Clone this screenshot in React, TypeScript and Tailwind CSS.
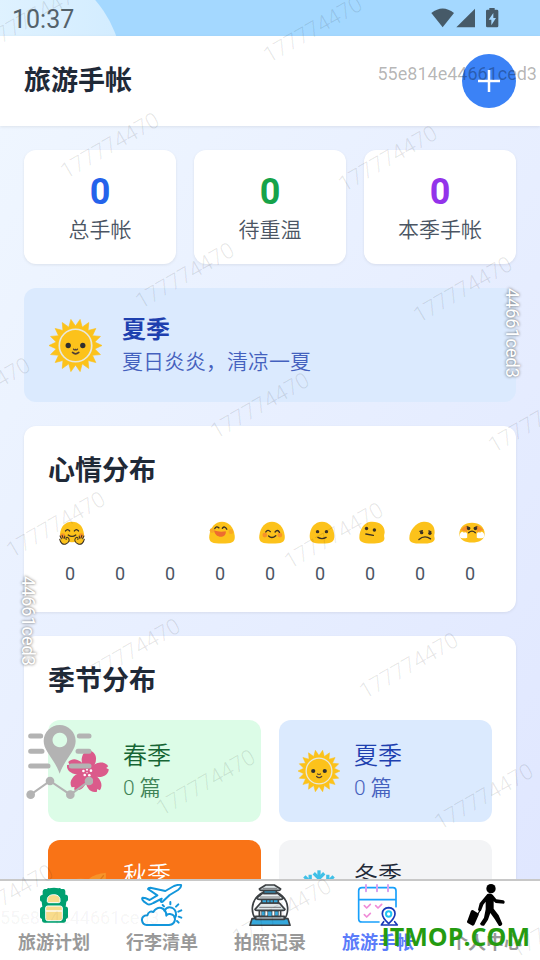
import type { ReactNode } from "react";

type Mood = "hug" | "laugh" | "blush" | "smile" | "neutral" | "sad" | "huff";

interface Season {
  name: string;
  count: number;
  card: string;
  icon: ReactNode;
}

interface Tab {
  label: string;
  icon: ReactNode;
  active?: boolean;
}

const STATS = [
  { label: "总手帐", value: 0, color: "text-[#2563eb]" },
  { label: "待重温", value: 0, color: "text-[#16a34a]" },
  { label: "本季手帐", value: 0, color: "text-[#9333ea]" },
];

const MOODS: { face: Mood | null; count: number }[] = [
  { face: "hug", count: 0 },
  { face: null, count: 0 },
  { face: null, count: 0 },
  { face: "laugh", count: 0 },
  { face: "blush", count: 0 },
  { face: "smile", count: 0 },
  { face: "neutral", count: 0 },
  { face: "sad", count: 0 },
  { face: "huff", count: 0 },
];

// 18 spikes, one pointing straight right
const SUN_POINTS = Array.from({ length: 36 }, (_, i) => {
  const r = i % 2 === 0 ? 80 : 59;
  const a = (i * Math.PI) / 18;
  return `${(80 + r * Math.cos(a)).toFixed(1)},${(80 + r * Math.sin(a)).toFixed(1)}`;
}).join(" ");

function SunIcon({ className }: { className: string }) {
  return (
    <svg className={className} viewBox="0 0 160 160" aria-hidden="true">
      <polygon points={SUN_POINTS} fill="#fcc21b" stroke="#fcc21b" strokeWidth="2" />
      <circle cx="80" cy="80" r="49" fill="#fcc21b" stroke="#e8e8dc" strokeWidth="5" />
      <circle cx="58" cy="80" r="8" fill="#2f2f2f" />
      <circle cx="102" cy="80" r="8" fill="#2f2f2f" />
      <path d="M74 91q3 4 6 1q3 3 6-1" fill="none" stroke="#513f35" strokeWidth="4" strokeLinecap="round" />
      <path d="M71 101q9 8 19 0" fill="none" stroke="#513f35" strokeWidth="5" strokeLinecap="round" />
    </svg>
  );
}

function SakuraIcon({ className }: { className: string }) {
  return (
    <svg className={className} viewBox="0 0 128 128" aria-hidden="true">
      <g fill="#db5a8b">
        {[6, 78, 150, 222, 294].map((deg) => (
          <path
            key={deg}
            transform={`rotate(${deg} 62 68)`}
            d="M62 74C50 58 38 40 41 23C42 12 50 4 57 2L61 9L67 2C77 6 84 14 84 25C86 42 74 58 62 74Z"
          />
        ))}
        <circle cx="62" cy="68" r="20" />
      </g>
      <g fill="#fff">
        <circle cx="50" cy="64" r="4" />
        <circle cx="61" cy="60" r="3" />
        <circle cx="73" cy="63" r="4" />
        <circle cx="54" cy="76" r="4" />
        <circle cx="68" cy="77" r="4" />
        <circle cx="61" cy="69" r="2" />
      </g>
    </svg>
  );
}

function LeafIcon({ className }: { className: string }) {
  return (
    <svg className={className} viewBox="0 0 128 128" aria-hidden="true">
      <path d="M118 8C92 12 66 18 60 40C54 64 72 82 92 72C116 60 120 32 118 8Z" fill="#f79329" />
      <path d="M112 16C98 34 82 52 58 92" fill="none" stroke="#e07a1a" strokeWidth="4" />
      <path d="M10 34C34 22 58 22 66 38C74 58 60 78 42 74C22 68 18 48 10 34Z" fill="#f58220" />
      <path d="M18 34C34 46 46 60 62 98" fill="none" stroke="#d96e14" strokeWidth="4" />
    </svg>
  );
}

function SnowflakeIcon({ className }: { className: string }) {
  return (
    <svg className={className} viewBox="0 0 128 128" fill="none" stroke="#40c0e7" strokeWidth="10" aria-hidden="true">
      {[0, 45, 90, 135, 180, 225, 270, 315].map((deg) => (
        <g key={deg} transform={`rotate(${deg} 64 64)`}>
          <path d="M64 64V1" />
          <path d="M48 10L64 26L80 10" />
        </g>
      ))}
    </svg>
  );
}

const BLOBS: Record<Mood, string> = {
  hug: "M38 2C58 2 71 16 73 38C75 56 66 62 38 62C10 62 1 56 3 38C5 16 18 2 38 2Z",
  laugh: "M38 2C58 2 72 18 75 42C77 60 70 66 38 66C6 66 -1 60 1 42C4 18 18 2 38 2Z",
  blush: "M38 2C58 2 72 18 75 42C77 60 70 66 38 66C6 66 -1 60 1 42C4 18 18 2 38 2Z",
  smile: "M38 2C59 2 74 20 74 44C74 61 66 66 38 66C10 66 2 61 2 44C2 20 17 2 38 2Z",
  neutral: "M34 2C58 0 75 12 75 32C75 38 72 40 74 48C77 62 60 66 38 66C10 66 1 60 1 48C1 26 14 4 34 2Z",
  sad: "M42 2C62 0 76 12 75 34C74 40 73 42 75 50C76 62 62 66 38 66C10 66 1 62 1 50C1 28 20 4 42 2Z",
  huff: "M38 5C60 5 75 18 75 38C75 55 58 63 38 63C18 63 1 55 1 38C1 18 16 5 38 5Z",
};

function MoodIcon({ face }: { face: Mood }) {
  return (
    <svg className="h-6 w-[26px]" viewBox="0 0 76 70" aria-hidden="true">
      <path d={BLOBS[face]} fill="#fcc21b" />
      <g fill="none" stroke="#3a3024" strokeWidth="4" strokeLinecap="round">
        {face === "hug" && (
          <>
            <path d="M19 29q6-8 12 0M45 29q6-8 12 0M27 41q11 8 22 0" />
            <circle cx="11" cy="43" r="7" fill="#f79329" stroke="none" />
            <circle cx="65" cy="43" r="7" fill="#f79329" stroke="none" />
            <g strokeWidth="3">
              <path
                d="M3 44l4 8M9 42l3 8M17 44l-1 6M2 53c2 12 10 17 18 14c10-4 12-12 7-18c-4-4-8 0-6 5"
                fill="#fcc21b"
              />
              <path
                d="M73 44l-4 8M67 42l-3 8M59 44l1 6M74 53c-2 12-10 17-18 14c-10-4-12-12-7-18c4-4 8 0 6 5"
                fill="#fcc21b"
              />
            </g>
          </>
        )}
        {face === "laugh" && (
          <>
            <circle cx="9" cy="28" r="7" fill="#f9a825" stroke="none" />
            <circle cx="64" cy="31" r="7" fill="#f9a825" stroke="none" />
            <path d="M17 22q4-9 12-2M39 21q7-8 13 3" />
            <path d="M15 28C27 32 39 32 49 30C52 51 18 53 15 28Z" fill="#ed6c30" stroke="none" />
          </>
        )}
        {face === "blush" && (
          <>
            <circle cx="17" cy="41" r="7" fill="#f79329" stroke="none" />
            <circle cx="61" cy="41" r="7" fill="#f79329" stroke="none" />
            <path d="M20 32q6-9 13-1M47 32q7-9 13 1M28 44q10 9 21-1" />
          </>
        )}
        {face === "smile" && (
          <>
            <circle cx="25" cy="31" r="5" fill="#3a3024" stroke="none" />
            <circle cx="51" cy="31" r="5" fill="#3a3024" stroke="none" />
            <path d="M26 48q12 7 24 0" />
          </>
        )}
        {face === "neutral" && (
          <>
            <circle cx="22" cy="22" r="5" fill="#3a3024" stroke="none" />
            <circle cx="45" cy="26" r="5" fill="#3a3024" stroke="none" />
            <path d="M20 38l22 4" />
          </>
        )}
        {face === "sad" && (
          <>
            <circle cx="37" cy="34" r="5" fill="#3a3024" stroke="none" />
            <circle cx="61" cy="36" r="5" fill="#3a3024" stroke="none" />
            <path d="M32 30l7-2M58 29l6 3M29 54q16-14 34-2" />
          </>
        )}
        {face === "huff" && (
          <>
            <path d="M4 26q8-11 21-14l-1 20zM72 26q-8-11-21-14l1 20z" fill="#f79329" stroke="none" />
            <circle cx="28" cy="22" r="5" fill="#3a3024" stroke="none" />
            <circle cx="48" cy="22" r="5" fill="#3a3024" stroke="none" />
            <path d="M24 17l7 3M52 17l-7 3M28 34q10-9 20 0" />
            <path
              d="M5 34q5-5 9 0q6-3 10 3v12q-9 3-20 0q-5-8 1-15zM71 34q-5-5-9 0q-6-3-10 3v12q9 3 20 0q5-8-1-15z"
              fill="#fff"
              stroke="none"
            />
          </>
        )}
      </g>
    </svg>
  );
}

const SEASONS: Season[] = [
  { name: "春季", count: 0, card: "bg-[#dcfce7] text-[#166534]", icon: <SakuraIcon className="size-[42px]" /> },
  { name: "夏季", count: 0, card: "bg-[#dbeafe] text-[#1e40af]", icon: <SunIcon className="size-[42px]" /> },
  { name: "秋季", count: 0, card: "bg-[#f97316] text-white", icon: <LeafIcon className="size-[42px]" /> },
  { name: "冬季", count: 0, card: "bg-[#f3f4f6] text-[#1f2937]", icon: <SnowflakeIcon className="size-[42px]" /> },
];

const TABS: Tab[] = [
  {
    label: "旅游计划",
    icon: (
      <>
        <path
          d="M42 15Q44 11 49 13Q63 9 77 13Q82 11 84 15H92Q97 16 97 22V32H100Q105 33 105 38V48Q104 52 100 53L98 68H101Q105 70 105 74V100Q104 104 99 105V110Q98 116 92 116H34Q28 116 27 110V105Q22 104 21 100V74Q22 69 28 68L26 53Q21 52 21 48V38Q22 33 29 32V22Q30 16 35 15Z"
          fill="#00a070"
        />
        <path
          d="M43 53V47C43 36 53 32 62 32C71 32 81 36 81 47V53Q80 56 77 56H47Q44 56 43 53Z"
          fill="#f8dc8c"
          stroke="#fff"
          strokeWidth="3"
        />
        <path
          d="M44 66H82Q88 66 88 72V104Q87 110 81 110H44Q38 110 38 104V72Q38 66 44 66Z"
          fill="#f8dc8c"
          stroke="#fff"
          strokeWidth="3"
        />
        <path d="M39 81H87" stroke="#fff" strokeWidth="4" />
      </>
    ),
  },
  {
    label: "行李清单",
    icon: (
      <g fill="none" stroke="#1296db" strokeWidth="6" strokeLinejoin="round" strokeLinecap="round">
        <path d="M5 41L15 43L26 48L49 34L21 15Q22 11 28 11L73 21L99 6Q112 1 120 3Q122 10 111 18L86 33L66 52Q62 57 59 51L62 44L37 57Q25 64 19 60L8 52Q1 45 5 41Z" />
        <path d="M17 123H84Q101 121 102 106Q102 92 87 90Q79 89 76 95Q76 77 61 72Q47 69 37 84Q24 79 19 94Q2 95 3 109Q5 122 17 123Z" />
        <path d="M70 80Q78 67 92 71Q104 76 105 89Q106 98 101 101" />
        <path d="M88 61V54M105 68L112 61M112 83L121 79M113 98L121 101M108 111L113 116M69 67L65 63" />
      </g>
    ),
  },
  {
    label: "拍照记录",
    icon: (
      <g stroke="#3c4043" strokeWidth="5" strokeLinejoin="round" strokeLinecap="round">
        <path d="M22 108A53 53 0 1 1 104 108" fill="#fff" />
        <path d="M9 104H117L123 124H3Z" fill="#35a8dc" />
        <path d="M20 106V97H106V106Z" fill="#d9e3e8" />
        <path d="M31 77H95V97H31Z" fill="#fff" />
        <path d="M38 81H48V95H38ZM57 81H69V97H57ZM78 81H88V95H78Z" fill="#35a8dc" strokeWidth="2" />
        <path d="M35 57H91L108 76Q106 80 99 79H27Q20 80 18 76Z" fill="#dfe7ea" />
        <path d="M38 45H88V57H38Z" fill="#35a8dc" />
        <path d="M53 46V56M63 46V56M73 46V56" strokeWidth="3" />
        <path d="M40 28H86L103 42Q100 47 94 46H32Q26 47 23 42Z" fill="#eef2f4" />
        <path d="M44 19H82V28H44Z" fill="#35a8dc" />
        <path d="M50 3H76L95 15Q93 20 88 19H38Q33 20 31 15Z" fill="#dfe7ea" />
        <path d="M42 13H84M34 39H92M32 70H95" strokeWidth="2" />
      </g>
    ),
  },
  {
    label: "旅游手帐",
    active: true,
    icon: (
      <g fill="none" strokeLinecap="round" strokeLinejoin="round">
        <path d="M66 114H15Q5 114 5 104V20Q5 11 15 11H108Q117 11 117 20V68M5 47H117" stroke="#18a0fb" strokeWidth="5" />
        <path d="M27 3V22M60 3V22M93 3V22" stroke="#d9a0ee" strokeWidth="6" />
        <path
          d="M22 65L29 72L40 61M56 65L63 72L74 61M22 92L29 99L40 88"
          stroke="#f08cd8"
          strokeWidth="5"
        />
        <path d="M95 119Q76 101 76 89Q77 72 95 71Q113 72 114 89Q114 101 95 119Z" stroke="#1838b8" strokeWidth="5" />
        <circle cx="95" cy="90" r="8" stroke="#20c4f4" strokeWidth="6" />
        <path d="M80 113L73 123H121L113 113" stroke="#1838b8" strokeWidth="5" />
      </g>
    ),
  },
  {
    label: "个人中心",
    icon: (
      <g fill="#000">
        <circle cx="78" cy="14" r="14" />
        <path d="M67 30Q75 26 83 32L94 46L115 49Q122 53 117 59L92 57L86 52V74L101 94L112 119Q111 126 102 126L89 105L76 87L69 107L57 125Q47 127 45 119L57 101L62 76V53L55 62L48 80Q41 84 39 77L44 58Z" />
        <path d="M46 78L33 99" stroke="#000" strokeWidth="4" />
        <path d="M18 80Q23 76 27 80L39 88Q43 91 40 95L28 122Q24 127 20 124L8 117Q4 114 8 108Z" />
      </g>
    ),
  },
];

// Centres of the repeating account mark: columns step (278, 13), rows step (75, 130)
const MARKS = [
  [35, 16], [313, 30], [110, 146], [388, 159], [185, 276], [463, 290],
  [-19, 391], [260, 406], [538, 420], [56, 525], [334, 536], [131, 652],
  [409, 666], [206, 783], [484, 797], [4, 898], [282, 912], [560, 925],
];

function Watermarks() {
  return (
    <div className="pointer-events-none absolute inset-0 z-20 overflow-hidden" aria-hidden="true">
      {MARKS.map(([left, top]) => (
        <span
          key={`${left}-${top}`}
          className="absolute -translate-x-1/2 -translate-y-1/2 -rotate-30 text-[22px] leading-6 font-light text-black/10"
          style={{ left, top }}
        >
          177774470
        </span>
      ))}
      <span className="absolute top-[62px] right-[3px] text-[18px] leading-6 text-black/30">55e814e44661ced3</span>
      <span className="absolute bottom-[30px] left-0 text-[18px] leading-6 text-black/5">55e814e44661ced3</span>
      <span className="absolute top-[288px] right-4 text-[18px] leading-6 text-white [text-shadow:0_0_3px_#555] [writing-mode:vertical-rl]">
        44661ced3
      </span>
      <span className="absolute top-[576px] left-4 text-[18px] leading-6 text-white [text-shadow:0_0_3px_#555] [writing-mode:vertical-rl]">
        44661ced3
      </span>
      <span className="absolute right-2.5 bottom-1.5 font-['Open_Sans'] text-[25px] leading-9 font-bold text-[#259b10]">
        ITMOP.COM
      </span>
    </div>
  );
}

function StatusBar() {
  return (
    <div className="relative flex h-9 shrink-0 items-center justify-between overflow-hidden bg-[#a4d8ff] pr-10 pl-3 text-[#54626b]">
      <div className="absolute -top-10 -left-[107px] size-[230px] rounded-full bg-linear-to-r from-[#eaf7ff] to-[#d2ecff]" />
      <span className="relative pt-1 text-[25px] leading-8">10:37</span>
      <svg className="relative h-5 w-[70px] text-[#465a68]" viewBox="0 0 210 60" fill="currentColor" aria-hidden="true">
        <path d="M4 15Q38-12 72 15L38 58Z" />
        <path d="M135 2V58H79Z" />
        <path
          fillRule="evenodd"
          d="M178 0H194V5H201Q205 5 205 9V54Q205 58 201 58H172Q168 58 168 54V9Q168 5 172 5H178ZM190 15L176 35H184V52L198 30H190Z"
        />
      </svg>
    </div>
  );
}

function PlanButton() {
  return (
    <button type="button" aria-label="旅行路线" className="absolute top-[724px] left-[26px] z-10 h-20 w-[67px] text-[#b3b3b3]">
      <svg viewBox="0 0 201 240" fill="none" stroke="currentColor" strokeLinecap="round" aria-hidden="true">
        <path d="M14 36H44M160 36H189M14 82H48M156 82H189M14 126H66M136 126H189" strokeWidth="15" />
        <path
          fill="currentColor"
          stroke="none"
          fillRule="evenodd"
          d="M101 3C127 3 149 24 149 51C149 82 116 105 101 149C86 105 53 82 53 51C53 24 75 3 101 3ZM101 26A22 22 0 1 0 102 26Z"
        />
        <path d="M14 212L72 171L133 212L189 171" strokeWidth="6" />
        <g fill="currentColor" stroke="none">
          <circle cx="14" cy="212" r="13" />
          <circle cx="72" cy="171" r="13" />
          <circle cx="133" cy="212" r="13" />
          <circle cx="189" cy="171" r="13" />
        </g>
      </svg>
    </button>
  );
}

export default function App() {
  return (
    <div className="relative flex h-screen flex-col overflow-hidden bg-white font-[Roboto,'Noto_Sans_CJK_SC',sans-serif]">
      <StatusBar />

      <header className="z-10 flex shrink-0 items-center justify-between bg-white px-6 py-[18px] shadow-[0_1px_3px_rgba(0,0,0,0.08)]">
        <h1 className="text-[27px] leading-[42px] font-bold text-[#1f2937]">旅游手帐</h1>
        <button
          type="button"
          aria-label="新建手帐"
          className="flex size-[54px] items-center justify-center rounded-full bg-[#3b82f6] text-white"
        >
          <svg className="size-6" viewBox="0 0 24 24" stroke="currentColor" strokeWidth="2.5" aria-hidden="true">
            <path d="M12 1V23M1 12H23" />
          </svg>
        </button>
      </header>

      <main className="min-h-0 flex-1 overflow-y-auto bg-linear-to-br from-[#eff6ff] to-[#e0e7ff] [scrollbar-width:none]">
        <div className="flex flex-col gap-6 p-6">
          <section className="grid grid-cols-3 gap-[18px]">
            {STATS.map((stat) => (
              <div
                key={stat.label}
                className="rounded-xl bg-white pt-[18px] pb-5 text-center shadow-[0_1px_3px_rgba(0,0,0,0.08)]"
              >
                <p className={`text-[36px] leading-[48px] font-bold ${stat.color}`}>{stat.value}</p>
                <p className="text-[21px] leading-7 font-[350] text-[#4b5563]">{stat.label}</p>
              </div>
            ))}
          </section>

          <section className="flex items-center gap-5 rounded-xl bg-[#dbeafe] px-[25px] py-6 text-[#1e40af]">
            <SunIcon className="size-[53px]" />
            <div className="pb-0.5">
              <h2 className="text-[24px] leading-9 font-bold">夏季</h2>
              <p className="text-[21px] leading-7 font-[350] opacity-80">夏日炎炎，清凉一夏</p>
            </div>
          </section>

          <section className="rounded-xl bg-white p-6 shadow-[0_1px_3px_rgba(0,0,0,0.08)]">
            <h2 className="mb-[18px] text-[27px] leading-[42px] font-bold text-[#1f2937]">心情分布</h2>
            <ul className="grid grid-cols-9 gap-1.5 pb-0.5">
              {MOODS.map((mood, i) => (
                <li key={i} className="flex flex-col items-center">
                  <div className="flex h-[46px] items-center pl-1">{mood.face && <MoodIcon face={mood.face} />}</div>
                  <span className="mt-1.5 text-[18px] leading-6 text-[#4b5563]">{mood.count}</span>
                </li>
              ))}
            </ul>
          </section>

          <section className="rounded-xl bg-white p-6 shadow-[0_1px_3px_rgba(0,0,0,0.08)]">
            <h2 className="mb-[18px] text-[27px] leading-[42px] font-bold text-[#1f2937]">季节分布</h2>
            <div className="grid grid-cols-2 gap-[18px]">
              {SEASONS.map((season) => (
                <div key={season.name} className={`flex items-center gap-3.5 rounded-xl px-[19px] py-[18px] ${season.card}`}>
                  {season.icon}
                  <div className="pb-0.5">
                    <h3 className="text-[24px] leading-9 font-[350]">{season.name}</h3>
                    <p className="text-[21px] leading-7 font-[350] opacity-80">{season.count} 篇</p>
                  </div>
                </div>
              ))}
            </div>
          </section>
        </div>
      </main>

      <nav className="grid shrink-0 grid-cols-5 border-t-2 border-[#c8c8c8] bg-white pt-[3px]">
        {TABS.map((tab) => (
          <a
            key={tab.label}
            href="#"
            aria-current={tab.active ? "page" : undefined}
            className={`flex flex-col items-center text-[18px] leading-[34px] font-bold ${
              tab.active ? "text-[#5b7cfa]" : "text-[#999999]"
            }`}
          >
            <svg className="size-[42px]" viewBox="0 0 126 126" fill="none" aria-hidden="true">
              {tab.icon}
            </svg>
            {tab.label}
          </a>
        ))}
      </nav>

      <PlanButton />
      <Watermarks />
    </div>
  );
}
